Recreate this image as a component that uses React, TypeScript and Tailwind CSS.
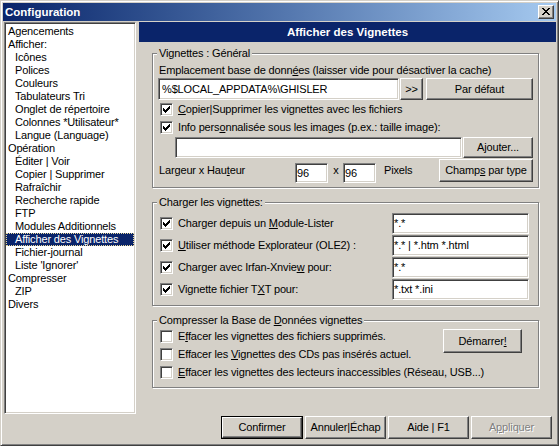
import React from "react";

const raised =
  "border border-t-white border-l-white border-r-[#404040] border-b-[#404040] shadow-[inset_-1px_-1px_0_#808080]";
const sunken =
  "border border-t-[#808080] border-l-[#808080] border-r-white border-b-white shadow-[inset_1px_1px_0_#404040,inset_-1px_-1px_0_#d4d0c8]";
const etched = "border border-[#808080] shadow-[inset_1px_1px_0_#fff,1px_1px_0_#fff]";

function U({ children }: { children: React.ReactNode }) {
  return <span className="underline">{children}</span>;
}

function Check({ checked }: { checked: boolean }) {
  return (
    <span className={"relative block w-[13px] h-[13px] shrink-0 bg-white " + sunken}>
      {checked && (
        <svg
          className="absolute left-[2px] top-[2px]"
          width="7"
          height="7"
          viewBox="0 0 7 7"
          shapeRendering="crispEdges"
        >
          <path
            fill="#000"
            d="M6 0h1v1H6z M5 1h2v1H5z M0 2h1v1H0z M4 2h3v1H4z M0 3h2v1H0z M3 3h3v1H3z M0 4h5v1H0z M1 5h3v1H1z M2 6h1v1H2z"
          />
        </svg>
      )}
    </span>
  );
}

function CheckRow({
  checked,
  children,
  className = "",
}: {
  checked: boolean;
  children: React.ReactNode;
  className?: string;
}) {
  return (
    <div className={"flex items-center " + className}>
      <span className="ml-[2px]">
        <Check checked={checked} />
      </span>
      <span className="ml-[5px] whitespace-nowrap">{children}</span>
    </div>
  );
}

function Edit({ value = "", className = "", pad = "pl-[2px]" }: { value?: string; className?: string; pad?: string }) {
  return (
    <div className={"flex items-center bg-white shrink-0 whitespace-nowrap overflow-hidden " + sunken + " " + pad + " " + className}>
      <span>{value}</span>
    </div>
  );
}

function Btn({
  children,
  className = "",
  def = false,
  disabled = false,
}: {
  children: React.ReactNode;
  className?: string;
  def?: boolean;
  disabled?: boolean;
}) {
  return (
    <div className={"flex shrink-0 " + (def ? "border border-black " : "") + className}>
      <div
        className={
          "flex-1 flex items-center justify-center whitespace-nowrap " +
          raised +
          (disabled ? " text-[#808080] [text-shadow:1px_1px_0_#fff]" : "")
        }
      >
        <span>{children}</span>
      </div>
    </div>
  );
}

function Group({
  label,
  className = "",
  children,
}: {
  label: React.ReactNode;
  className?: string;
  children: React.ReactNode;
}) {
  return (
    <div className={"relative ml-[13px] w-[387px] shrink-0 pl-[5px] pr-[5px] flex flex-col " + etched + " " + className}>
      <span className="absolute left-[4px] -top-[7px] h-[13px] px-[2px] bg-[#d4d0c8] whitespace-nowrap">{label}</span>
      {children}
    </div>
  );
}

const treeItems: [string, number][] = [
  ["Agencements", 0],
  ["Afficher:", 0],
  ["Icônes", 1],
  ["Polices", 1],
  ["Couleurs", 1],
  ["Tabulateurs Tri", 1],
  ["Onglet de répertoire", 1],
  ["Colonnes *Utilisateur*", 1],
  ["Langue (Language)", 1],
  ["Opération", 0],
  ["Éditer | Voir", 1],
  ["Copier | Supprimer", 1],
  ["Rafraîchir", 1],
  ["Recherche rapide", 1],
  ["FTP", 1],
  ["Modules Additionnels", 1],
  ["Afficher des Vignettes", 1],
  ["Fichier-journal", 1],
  ["Liste 'Ignorer'", 1],
  ["Compresser", 0],
  ["ZIP", 1],
  ["Divers", 0],
];

export default function App() {
  return (
    <div className="w-[559px] h-[446px] overflow-hidden bg-[#d4d0c8] font-['Liberation_Sans',Arial,sans-serif] text-[11px] leading-[13px] tracking-[-0.15px] text-black select-none">
      <div className="w-full h-full flex flex-col p-[2px] border border-t-[#d4d0c8] border-l-[#d4d0c8] border-r-[#404040] border-b-[#404040] shadow-[inset_1px_1px_0_#fff,inset_-1px_-1px_0_#808080]">
        {/* Title bar */}
        <div className="h-[18px] shrink-0 flex items-center bg-linear-to-r from-[#0a246a] to-[#a6caf0] pl-[2px] pr-[2px]">
          <span className="text-white font-bold text-[11.5px] leading-[18px] tracking-normal">Configuration</span>
          <div className={"ml-auto w-[16px] h-[14px] bg-[#d4d0c8] pl-[3px] pt-[2px] " + raised}>
            <svg width="8" height="7" viewBox="0 0 8 7" shapeRendering="crispEdges" className="block">
              <path
                fill="#000"
                d="M0 0h2v1H0z M6 0h2v1H6z M1 1h2v1H1z M5 1h2v1H5z M2 2h4v1H2z M3 3h2v1H3z M2 4h4v1H2z M1 5h2v1H1z M5 5h2v1H5z M0 6h2v1H0z M6 6h2v1H6z"
              />
            </svg>
          </div>
        </div>

        {/* Client */}
        <div className="mt-[1px] flex-1 flex flex-col">
          <div className="flex h-[392px] shrink-0">
            {/* Tree list */}
            <div className={"ml-[1px] w-[132px] h-full shrink-0 bg-white pt-[2px] px-[1px] " + sunken}>
              {treeItems.map(([t, lvl]) => {
                const sel = t === "Afficher des Vignettes";
                return (
                  <div
                    key={t}
                    className={
                      "h-[13px] whitespace-nowrap " +
                      (lvl ? "pl-[9px] " : "pl-[2px] ") +
                      (sel ? "bg-[#0a246a] text-white outline-1 outline-dotted outline-[#e8d89a] -outline-offset-1" : "")
                    }
                  >
                    {t}
                  </div>
                );
              })}
            </div>

            {/* Right panel */}
            <div className="ml-[3px] flex-1 flex flex-col">
              <div className="h-[20px] shrink-0 bg-[#0a246a] text-white font-bold text-[11.5px] tracking-normal flex items-center justify-center">
                Afficher des Vignettes
              </div>

              {/* Group 1 */}
              <Group label="Vignettes : Général" className="mt-[11px] h-[135px]">
                <div className="mt-[10px] h-[13px] pl-[1px] whitespace-nowrap">
                  Emplacement base de donn<U>é</U>es (laisser vide pour désactiver la cache)
                </div>
                <div className="mt-[1px] h-[22px] flex">
                  <Edit value={"%$LOCAL_APPDATA%\\GHISLER"} className="w-[241px] h-full" pad="pl-[3px]" />
                  <Btn className="ml-[1px] w-[23px]">&gt;&gt;</Btn>
                  <Btn className="ml-[3px] w-[107px]">Par défaut</Btn>
                </div>
                <CheckRow checked className="mt-[3px] h-[13px]">
                  <U>C</U>opier|Supprimer les vignettes avec les fichiers
                </CheckRow>
                <CheckRow checked className="mt-[5px] h-[13px]">
                  Info pers<U>o</U>nnalisée sous les images (p.ex.: taille image):
                </CheckRow>
                <div className="mt-[3px] h-[21px] flex ml-[17px]">
                  <Edit className="w-[287px] h-full" />
                  <Btn className="ml-[1px] w-[70px]">Ajouter...</Btn>
                </div>
                <div className="mt-[1px] h-[23px] flex items-start">
                  <span className="w-[137px] self-center pl-[1px] whitespace-nowrap">
                    Largeur x Hau<U>t</U>eur
                  </span>
                  <Edit value="96" className="mt-[4px] w-[33px] h-[20px]" pad="pl-[1px]" />
                  <span className="w-[15px] self-center text-center pl-[1px]">x</span>
                  <Edit value="96" className="mt-[4px] w-[33px] h-[20px]" pad="pl-[1px]" />
                  <span className="ml-[8px] self-center">Pixels</span>
                  <Btn className="ml-auto w-[94px] h-[23px]">
                    Champ<U>s</U> par type
                  </Btn>
                </div>
              </Group>

              {/* Group 2 */}
              <Group label="Charger les vignettes:" className="mt-[14px] h-[104px]">
                <div className="mt-[10px] flex flex-col gap-[1px]">
                  {(
                    [
                      [<>Charger depuis un <U>M</U>odule-Lister</>, "*.*"],
                      [<><U>U</U>tiliser méthode Explorateur (OLE2) :</>, "*.* | *.htm *.html"],
                      [<>Charger avec Irfan-Xnvie<U>w</U> pour:</>, "*.*"],
                      [<>Vignette fichier T<U>X</U>T pour:</>, "*.txt *.ini"],
                    ] as [React.ReactNode, string][]
                  ).map(([lbl, val], i) => (
                    <div key={i} className="h-[21px] flex items-center">
                      <CheckRow checked className="w-[234px] h-[13px]">
                        {lbl}
                      </CheckRow>
                      <Edit value={val} className="w-[137px] h-full" pad="pl-[1px]" />
                    </div>
                  ))}
                </div>
              </Group>

              {/* Group 3 */}
              <Group
                label={
                  <>
                    Compresser la Base de <U>D</U>onnées vignettes
                  </>
                }
                className="mt-[14px] h-[68px]"
              >
                <div className="mt-[9px] flex items-start">
                  <div className="w-[285px] flex flex-col">
                    <CheckRow checked={false} className="h-[13px]">
                      E<U>f</U>facer les vignettes des fichiers supprimés.
                    </CheckRow>
                    <CheckRow checked={false} className="mt-[5px] h-[13px]">
                      Effacer les <U>V</U>ignettes des CDs pas insérés actuel.
                    </CheckRow>
                  </div>
                  <Btn className="-mt-[1px] w-[79px] h-[24px]">
                    Démarrer<U>!</U>
                  </Btn>
                </div>
                <CheckRow checked={false} className="mt-[5px] h-[13px]">
                  <U>E</U>ffacer les vignettes des lecteurs inaccessibles (Réseau, USB...)
                </CheckRow>
              </Group>
            </div>
          </div>

          {/* Bottom buttons */}
          <div className="mt-[2px] h-[23px] flex justify-end gap-[2px] pr-[4px]">
            <Btn def className="w-[82px]">
              Confirmer
            </Btn>
            <Btn className="w-[81px]">Annuler|Échap</Btn>
            <Btn className="w-[81px]">Aide | F1</Btn>
            <Btn disabled className="w-[81px]">
              A<U>p</U>pliquer
            </Btn>
          </div>
        </div>
      </div>
    </div>
  );
}
